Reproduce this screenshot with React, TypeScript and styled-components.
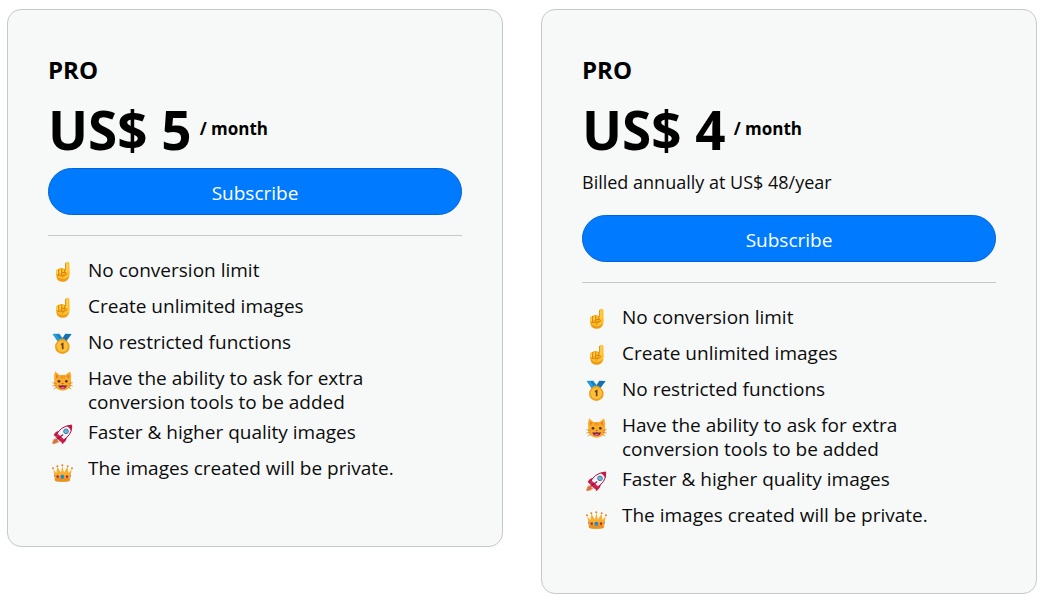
import React from "react";
import styled, { createGlobalStyle } from "styled-components";

const GlobalStyle = createGlobalStyle`
  *, *::before, *::after { box-sizing: border-box; }
  body {
    margin: 0;
    background: #ffffff;
    color: #0c0c0c;
    font-family: "Open Sans", "Noto Sans", sans-serif;
    font-size: 19px;
    line-height: 24px;
  }
`;

const Plans = styled.main`
  display: grid;
  grid-template-columns: 1fr 1fr;
  align-items: start;
  gap: 38px;
  padding: 9px 6px 6px 7px;
`;

const Card = styled.section`
  padding: 40px;
  border: 1px solid #c6c8c9;
  border-radius: 14px;
  background: #f7f9f9;
`;

const PlanName = styled.h2`
  margin: 0;
  font-size: 24px;
  line-height: 40px;
  font-weight: 700;
  color: #000000;
`;

const PriceRow = styled.div`
  display: flex;
  align-items: center;
  gap: 8px;
  font-weight: 700;
  color: #000000;
`;

const Amount = styled.span`
  padding-top: 2px;
  font-size: 53px;
  line-height: 76px;
`;

const Period = styled.span`
  font-size: 17px;
`;

const Billing = styled.p`
  margin: 0 0 19px;
  font-size: 18px;
  line-height: 28px;
`;

const SubscribeButton = styled.button`
  display: block;
  width: 100%;
  height: 47px;
  padding: 2px 0 0;
  border: 1px solid #0062d6;
  border-radius: 24px;
  background: #007bff;
  color: #ffffff;
  font: inherit;
  cursor: pointer;
`;

const Divider = styled.hr`
  height: 1px;
  margin: 20px 0 22px;
  border: 0;
  background: #c6c8c9;
`;

const Features = styled.ul`
  margin: 0 0 14px;
  padding: 0 60px 0 3px;
  list-style: none;
`;

const Feature = styled.li`
  display: flex;
  align-items: flex-start;
  gap: 13px;
  padding-bottom: 6px;
  min-height: 36px;
`;

const Icon = styled.svg`
  flex: none;
  width: 24px;
  height: 26px;
  padding-top: 2px;
`;

const FingerIcon = () => (
  <Icon viewBox="0 0 72 72" aria-hidden="true">
    <path d="M44 8q5-6 11 0l1 29q1 6-1 12-5 15-20 15-16 0-19-13l-1-17q0-6 6-6l2-1q3-4 8-2 4-3 9 1l5 2z" fill="#fdbf2d" />
    <path d="M18 48q5 9 17 9 13 0 20-10-3 18-20 18-16 0-18-15z" fill="#ef9a16" />
    <path d="M23 28v17M32 26v18M41 29v10M17 44q3 5 8 2 4 4 8 0 5 2 7-3M27 42q8-7 18-4 4 2 1 5-9 1-12 9M44 10v18" fill="none" stroke="#d9830b" strokeWidth="3" strokeLinecap="round" />
    <path d="M48 9v25M19 34v7M28 31v8" fill="none" stroke="#ffdc62" strokeWidth="3" strokeLinecap="round" />
  </Icon>
);

const MedalIcon = () => (
  <Icon viewBox="0 0 72 72" aria-hidden="true">
    <path d="M5 6l20-1 13 18-17 6Z" fill="#1686c9" />
    <path d="M43 5l19 1-16 22-15-5Z" fill="#1472b3" />
    <path d="M5 6l8-1 16 21-8 3Z" fill="#2b9ddb" />
    <rect x="26" y="20" width="15" height="7" rx="3" fill="#e8a427" />
    <circle cx="34" cy="44" r="22" fill="#eda01e" />
    <circle cx="34" cy="43" r="17" fill="#fdc03b" />
    <path d="M30 38l5-3v17" fill="none" stroke="#70400b" strokeWidth="5" />
  </Icon>
);

const CatIcon = () => (
  <Icon viewBox="0 0 72 72" aria-hidden="true">
    <path d="M12 11q2-1 5 3l10 8q8-2 15 0l10-8q4-4 6-2 4 12 2 26 3 15-6 23-8 7-19 7-12 0-19-7-9-9-6-23-3-16 2-27z" fill="#faac2c" />
    <path d="M15 19l8 6-8 8zM54 19l-8 6 9 8z" fill="#e97d2c" />
    <path d="M30 22v9M35 21v11M40 22v9" stroke="#dd8421" strokeWidth="2" />
    <path d="M4 44l13 3M4 54l13-2M8 63l10-5M65 44l-13 3M65 54l-13-2M61 63l-9-5" stroke="#c97a20" strokeWidth="2" />
    <ellipse cx="24" cy="40" rx="4" ry="4" fill="#553317" />
    <ellipse cx="46" cy="40" rx="4" ry="4" fill="#553317" />
    <path d="M31 45h8l-4 4z" fill="#bc4b36" />
    <path d="M22 51q7 3 13 0 7 3 13 0-2 12-13 12t-13-12z" fill="#81214f" />
    <path d="M28 59q7-5 14 0-7 6-14 0z" fill="#f06387" />
  </Icon>
);

const RocketIcon = () => (
  <Icon viewBox="0 0 72 72" aria-hidden="true">
    <path d="M4 66q-1-12 8-18l13 10q-6 9-21 8z" fill="#f49a55" />
    <path d="M5 65q2-10 9-14l7 7q-6 6-16 7z" fill="#cd704d" />
    <path d="M8 40q5-15 22-13L16 45q-4-3-8-5zM46 40q5 16-13 27l-3-14z" fill="#ca1945" />
    <path d="M15 44Q24 13 62 9q4 30-32 50z" fill="#f4f1f4" stroke="#a91443" strokeWidth="3" strokeLinejoin="round" />
    <path d="M47 12q8-3 15-3 2 9-1 18-5-10-14-15z" fill="#c71846" />
    <path d="M15 44l6-8 18 16-9 7z" fill="#d51e4b" />
    <path d="M18 51l17-12" stroke="#8e1740" strokeWidth="4" strokeLinecap="round" />
    <circle cx="45" cy="28" r="7" fill="#68b4dc" stroke="#497b9b" strokeWidth="3" />
  </Icon>
);

const CrownIcon = () => (
  <Icon viewBox="0 0 72 72" aria-hidden="true">
    <path d="M7 33l9 13 3-20 11 18 4-21 5 21 10-18 4 20 9-14-5 35q-2 4-23 4t-22-4z" fill="#f9ae2c" />
    <path d="M11 61q23-4 46 0l-1 7q-2 3-22 3t-22-3z" fill="#e99222" />
    <g fill="#dc8621">
      <circle cx="6" cy="31" r="3" /><circle cx="19" cy="25" r="3" />
      <circle cx="34" cy="22" r="3" /><circle cx="50" cy="25" r="3" />
      <circle cx="63" cy="31" r="3" />
    </g>
    <circle cx="34" cy="56" r="6" fill="#168fd1" />
    <circle cx="20" cy="56" r="4" fill="#c92340" />
    <circle cx="48" cy="56" r="4" fill="#c92340" />
    <circle cx="11" cy="54" r="2" fill="#278dc0" />
    <circle cx="58" cy="54" r="2" fill="#278dc0" />
  </Icon>
);

const features = [
  { icon: FingerIcon, text: "No conversion limit" },
  { icon: FingerIcon, text: "Create unlimited images" },
  { icon: MedalIcon, text: "No restricted functions" },
  { icon: CatIcon, text: "Have the ability to ask for extra conversion tools to be added" },
  { icon: RocketIcon, text: "Faster & higher quality images" },
  { icon: CrownIcon, text: "The images created will be private." },
];

type PlanProps = { price: string; billing?: string };

const Plan = ({ price, billing }: PlanProps) => (
  <Card>
    <PlanName>PRO</PlanName>
    <PriceRow>
      <Amount>{price}</Amount>
      <Period>/ month</Period>
    </PriceRow>
    {billing && <Billing>{billing}</Billing>}
    <SubscribeButton type="button">Subscribe</SubscribeButton>
    <Divider />
    <Features>
      {features.map(({ icon: FeatureIcon, text }) => (
        <Feature key={text}>
          <FeatureIcon />
          <span>{text}</span>
        </Feature>
      ))}
    </Features>
  </Card>
);

export default function App() {
  return (
    <>
      <GlobalStyle />
      <Plans>
        <Plan price="US$ 5" />
        <Plan price="US$ 4" billing="Billed annually at US$ 48/year" />
      </Plans>
    </>
  );
}
